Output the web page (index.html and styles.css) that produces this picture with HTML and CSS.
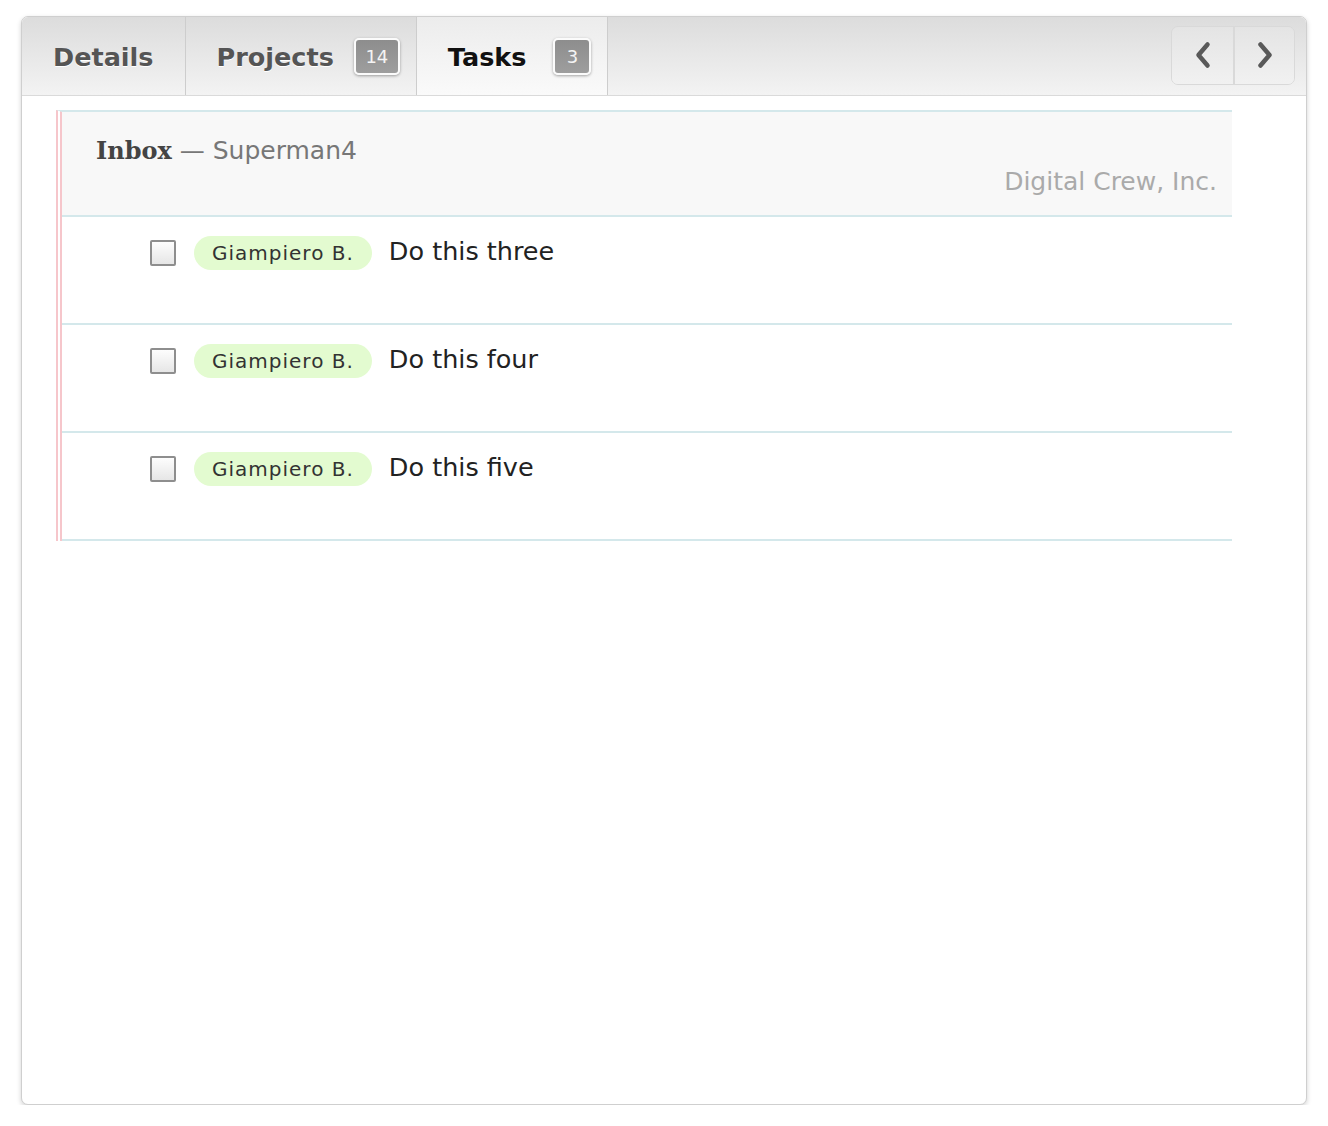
FILE: index.html
```html
<!DOCTYPE html>
<html>
<head>
<meta charset="utf-8">
<link rel="stylesheet" href="styles.css">
</head>
<body>
<div class="panel">
  <div class="tabbar">
    <div class="tab"><span class="tab-label">Details</span></div>
    <div class="tab"><span class="tab-label">Projects</span><span class="badge">14</span></div>
    <div class="tab active"><span class="tab-label">Tasks</span><span class="badge badge-tasks">3</span></div>
    <div class="spacer"></div>
    <div class="nav">
      <button class="nav-btn"><svg width="20" height="30" viewBox="0 0 20 30"><path d="M14.5 4.5 L5.5 15 L14.5 25.5" fill="none" stroke="#595959" stroke-width="4.5" stroke-linecap="round" stroke-linejoin="round"/></svg></button>
      <button class="nav-btn"><svg width="20" height="30" viewBox="0 0 20 30"><path d="M5.5 4.5 L14.5 15 L5.5 25.5" fill="none" stroke="#595959" stroke-width="4.5" stroke-linecap="round" stroke-linejoin="round"/></svg></button>
    </div>
  </div>
  <div class="content">
    <div class="list">
      <div class="list-head">
        <div class="title"><span class="inbox">Inbox</span><span class="owner"> — Superman4</span></div>
        <div class="company">Digital Crew, Inc.</div>
      </div>
      <div class="row">
        <span class="check"></span>
        <span class="pill">Giampiero B.</span>
        <span class="task">Do this three</span>
      </div>
      <div class="row">
        <span class="check"></span>
        <span class="pill">Giampiero B.</span>
        <span class="task">Do this four</span>
      </div>
      <div class="row">
        <span class="check"></span>
        <span class="pill">Giampiero B.</span>
        <span class="task">Do this five</span>
      </div>
    </div>
  </div>
</div>
</body>
</html>
```

FILE: styles.css
```css
html, body {
  margin: 0;
  padding: 0;
  background: #fff;
}
body {
  padding: 16px 0 0 21px;
  font-family: "DejaVu Sans", Verdana, sans-serif;
}
.panel {
  width: 1284px;
  height: 1087px;
  border: 1px solid #cfcfcf;
  border-radius: 7px;
  box-shadow: 0 2px 5px rgba(0,0,0,0.18);
  background: #fff;
  overflow: hidden;
  display: flex;
  flex-direction: column;
}
.tabbar {
  height: 78px;
  flex: none;
  display: flex;
  align-items: stretch;
  background: linear-gradient(#dcdcdc, #f3f3f3);
  border-bottom: 1px solid #dadada;
}
.tab {
  display: flex;
  align-items: center;
  padding: 2px 16px 0 31px;
  border-right: 1px solid #cdcdcd;
  font-size: 25.5px;
  font-weight: bold;
  color: #555;
  text-shadow: 0 1px 0 #fff;
}
.tab:first-child {
  padding-right: 31px;
}
.tab.active {
  background: linear-gradient(#ececec, #fafafa);
  color: #111;
}
.badge {
  margin-left: 20px;
  margin-top: -2px;
  display: inline-flex;
  align-items: center;
  justify-content: center;
  width: 42px;
  height: 33px;
  border: 2px solid #fbfbfb;
  border-radius: 5px;
  background: linear-gradient(#8d8d8d, #9e9e9e);
  color: #f4f4f4;
  font-size: 18px;
  font-weight: normal;
  text-shadow: none;
  box-shadow: 0 1px 3px rgba(0,0,0,0.35);
}
.badge-tasks {
  width: 34px;
  margin-left: 27px;
}
.spacer {
  flex: 1;
}
.nav {
  display: flex;
  align-self: center;
  margin-right: 11px;
  margin-top: -2px;
  border: 1px solid #d9d9d9;
  border-radius: 7px;
  overflow: hidden;
}
.nav-btn {
  width: 61px;
  height: 57px;
  border: 0;
  padding: 0;
  background: linear-gradient(#e4e4e4, #f1f1f1);
  display: flex;
  align-items: center;
  justify-content: center;
}
.nav-btn + .nav-btn {
  border-left: 2px solid #d9d9d9;
}
.content {
  padding: 14px 74px 0 34px;
}
.list {
  border-left: 6px double #f6c6cb;
  border-top: 2px solid #d4e8eb;
}
.list-head {
  background: #f8f8f8;
  height: 103px;
  padding: 0 15px 0 34px;
  border-bottom: 2px solid #d4e8eb;
  box-sizing: content-box;
}
.title {
  padding-top: 24px;
  line-height: 30px;
}
.inbox {
  font-family: "DejaVu Serif", Georgia, serif;
  font-weight: bold;
  font-size: 24px;
  color: #444;
}
.owner {
  font-size: 25px;
  color: #777;
}
.company {
  text-align: right;
  font-size: 25px;
  color: #aaa;
  line-height: 30px;
  margin-top: -2px;
}
.row {
  border-bottom: 2px solid #d4e8eb;
  display: flex;
  align-items: flex-start;
  padding: 19px 0 0 88px;
  box-sizing: border-box;
  height: 108px;
}
.check {
  width: 22px;
  height: 22px;
  margin-top: 4px;
  border: 2px solid #8e8e8e;
  border-radius: 2px;
  background: linear-gradient(#fdfdfd, #e6e6e6);
  flex: none;
}
.pill {
  margin-left: 18px;
  height: 34px;
  line-height: 34px;
  padding: 0 18px;
  border-radius: 17px;
  background: #e3fbd0;
  color: #333;
  font-size: 20px;
  letter-spacing: 1px;
}
.task {
  margin-left: 17px;
  font-size: 25.5px;
  line-height: 30px;
  color: #222;
}
```
